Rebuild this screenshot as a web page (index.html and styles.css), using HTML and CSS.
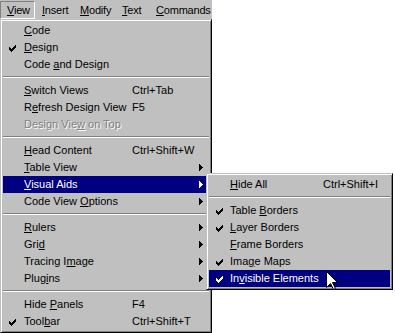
FILE: index.html
```html
<!DOCTYPE html>
<html>
<head>
<meta charset="utf-8">
<link rel="stylesheet" href="styles.css">
</head>
<body>
<div class="screen">
  <div class="menubar">
    <div class="mb-item pressed"><u>V</u>iew</div>
    <div class="mb-item"><u>I</u>nsert</div>
    <div class="mb-item"><u>M</u>odify</div>
    <div class="mb-item"><u>T</u>ext</div>
    <div class="mb-item"><u>C</u>ommands</div>
  </div>

  <div class="menu main">
    <div class="item"><span class="chk"></span><span class="label"><u>C</u>ode</span></div>
    <div class="item"><span class="chk"><svg width="7" height="7" viewBox="0 0 7 7"><path fill="currentColor" d="M6 0h1v1h-1z M5 1h2v1h-2z M0 2h1v1h-1z M4 2h3v1h-3z M0 3h2v1h-2z M3 3h3v1h-3z M0 4h5v1h-5z M1 5h3v1h-3z M2 6h1v1h-1z"/></svg></span><span class="label"><u>D</u>esign</span></div>
    <div class="item"><span class="chk"></span><span class="label">Code <u>a</u>nd Design</span></div>
    <div class="sep"></div>
    <div class="item"><span class="chk"></span><span class="label"><u>S</u>witch Views</span><span class="key">Ctrl+Tab</span></div>
    <div class="item"><span class="chk"></span><span class="label">R<u>e</u>fresh Design View</span><span class="key">F5</span></div>
    <div class="item disabled"><span class="chk"></span><span class="label">Design Vie<u>w</u> on Top</span></div>
    <div class="sep"></div>
    <div class="item"><span class="chk"></span><span class="label"><u>H</u>ead Content</span><span class="key">Ctrl+Shift+W</span></div>
    <div class="item"><span class="chk"></span><span class="label"><u>T</u>able View</span><span class="key"></span><span class="arr"><svg width="4" height="7" viewBox="0 0 4 7"><path fill="currentColor" d="M0 0h1v7h-1z M1 1h1v5h-1z M2 2h1v3h-1z M3 3h1v1h-1z"/></svg></span></div>
    <div class="item active"><span class="chk"></span><span class="label"><u>V</u>isual Aids</span><span class="key"></span><span class="arr"><svg width="4" height="7" viewBox="0 0 4 7"><path fill="currentColor" d="M0 0h1v7h-1z M1 1h1v5h-1z M2 2h1v3h-1z M3 3h1v1h-1z"/></svg></span></div>
    <div class="item"><span class="chk"></span><span class="label">Code View <u>O</u>ptions</span><span class="key"></span><span class="arr"><svg width="4" height="7" viewBox="0 0 4 7"><path fill="currentColor" d="M0 0h1v7h-1z M1 1h1v5h-1z M2 2h1v3h-1z M3 3h1v1h-1z"/></svg></span></div>
    <div class="sep"></div>
    <div class="item"><span class="chk"></span><span class="label"><u>R</u>ulers</span><span class="key"></span><span class="arr"><svg width="4" height="7" viewBox="0 0 4 7"><path fill="currentColor" d="M0 0h1v7h-1z M1 1h1v5h-1z M2 2h1v3h-1z M3 3h1v1h-1z"/></svg></span></div>
    <div class="item"><span class="chk"></span><span class="label">Gri<u>d</u></span><span class="key"></span><span class="arr"><svg width="4" height="7" viewBox="0 0 4 7"><path fill="currentColor" d="M0 0h1v7h-1z M1 1h1v5h-1z M2 2h1v3h-1z M3 3h1v1h-1z"/></svg></span></div>
    <div class="item"><span class="chk"></span><span class="label">Tracing I<u>m</u>age</span><span class="key"></span><span class="arr"><svg width="4" height="7" viewBox="0 0 4 7"><path fill="currentColor" d="M0 0h1v7h-1z M1 1h1v5h-1z M2 2h1v3h-1z M3 3h1v1h-1z"/></svg></span></div>
    <div class="item"><span class="chk"></span><span class="label">Plug<u>i</u>ns</span><span class="key"></span><span class="arr"><svg width="4" height="7" viewBox="0 0 4 7"><path fill="currentColor" d="M0 0h1v7h-1z M1 1h1v5h-1z M2 2h1v3h-1z M3 3h1v1h-1z"/></svg></span></div>
    <div class="sep"></div>
    <div class="item"><span class="chk"></span><span class="label">Hide <u>P</u>anels</span><span class="key">F4</span></div>
    <div class="item"><span class="chk"><svg width="7" height="7" viewBox="0 0 7 7"><path fill="currentColor" d="M6 0h1v1h-1z M5 1h2v1h-2z M0 2h1v1h-1z M4 2h3v1h-3z M0 3h2v1h-2z M3 3h3v1h-3z M0 4h5v1h-5z M1 5h3v1h-3z M2 6h1v1h-1z"/></svg></span><span class="label">Tool<u>b</u>ar</span><span class="key">Ctrl+Shift+T</span></div>
  </div>

  <div class="menu sub">
    <div class="item"><span class="chk"></span><span class="label"><u>H</u>ide All</span><span class="key">Ctrl+Shift+I</span></div>
    <div class="sep"></div>
    <div class="item"><span class="chk"><svg width="7" height="7" viewBox="0 0 7 7"><path fill="currentColor" d="M6 0h1v1h-1z M5 1h2v1h-2z M0 2h1v1h-1z M4 2h3v1h-3z M0 3h2v1h-2z M3 3h3v1h-3z M0 4h5v1h-5z M1 5h3v1h-3z M2 6h1v1h-1z"/></svg></span><span class="label">Table <u>B</u>orders</span></div>
    <div class="item"><span class="chk"><svg width="7" height="7" viewBox="0 0 7 7"><path fill="currentColor" d="M6 0h1v1h-1z M5 1h2v1h-2z M0 2h1v1h-1z M4 2h3v1h-3z M0 3h2v1h-2z M3 3h3v1h-3z M0 4h5v1h-5z M1 5h3v1h-3z M2 6h1v1h-1z"/></svg></span><span class="label"><u>L</u>ayer Borders</span></div>
    <div class="item"><span class="chk"></span><span class="label"><u>F</u>rame Borders</span></div>
    <div class="item"><span class="chk"><svg width="7" height="7" viewBox="0 0 7 7"><path fill="currentColor" d="M6 0h1v1h-1z M5 1h2v1h-2z M0 2h1v1h-1z M4 2h3v1h-3z M0 3h2v1h-2z M3 3h3v1h-3z M0 4h5v1h-5z M1 5h3v1h-3z M2 6h1v1h-1z"/></svg></span><span class="label">Ima<u>g</u>e Maps</span></div>
    <div class="item active"><span class="chk"><svg width="7" height="7" viewBox="0 0 7 7"><path fill="currentColor" d="M6 0h1v1h-1z M5 1h2v1h-2z M0 2h1v1h-1z M4 2h3v1h-3z M0 3h2v1h-2z M3 3h3v1h-3z M0 4h5v1h-5z M1 5h3v1h-3z M2 6h1v1h-1z"/></svg></span><span class="label">In<u>v</u>isible Elements</span></div>
  </div>

  <svg class="cursor" width="13" height="20" viewBox="0 0 13 20"><path d="M0.5 0.5 L0.5 16.5 L4.5 12.5 L7.5 18.5 L9.5 17.5 L6.5 11.5 L11.5 11.5 Z" fill="#fff" stroke="#000" stroke-width="1"/></svg>
</div>
</body>
</html>
```

FILE: styles.css
```css
html, body {
  margin: 0;
  padding: 0;
  background: #fff;
}

.screen {
  position: relative;
  width: 395px;
  height: 333px;
  overflow: hidden;
  font-family: "Liberation Sans", Arial, sans-serif;
  font-size: 11px;
  color: #000;
}

u {
  text-decoration: underline;
  text-underline-offset: 1px;
}

.menubar {
  width: 212px;
  height: 19px;
  box-sizing: border-box;
  padding-top: 1px;
  background: #c0c0c0;
  display: grid;
  grid-template-columns: 36px 38px 42px 34px 62px;
  overflow: hidden;
  letter-spacing: -0.2px;
}

.mb-item {
  height: 18px;
  line-height: 18px;
  padding-left: 6px;
  box-sizing: border-box;
  white-space: nowrap;
}

.mb-item.pressed {
  width: 35px;
  border: 1px solid;
  border-color: #808080 #fff #fff #808080;
  line-height: 16px;
  padding-left: 6px;
}

.menu {
  position: absolute;
  box-sizing: border-box;
  background: #c0c0c0;
  border: 1px solid;
  border-color: #c0c0c0 #000 #000 #c0c0c0;
  box-shadow: inset 1px 1px 0 #fff, inset -1px -1px 0 #808080;
  padding: 2px;
  display: flex;
  flex-direction: column;
}

.menu.main {
  left: 0;
  top: 19px;
  width: 212px;
  height: 314px;
  --label-w: 108px;
  --chk-x: 6px;
}

.menu.sub {
  left: 206px;
  top: 173px;
  width: 187px;
  height: 117px;
  --label-w: 93px;
  --chk-x: 7px;
}

.item {
  height: 17px;
  line-height: 17px;
  display: flex;
  align-items: center;
  white-space: nowrap;
}

.item .chk {
  width: 21px;
  height: 17px;
  flex: none;
  box-sizing: border-box;
  padding-left: var(--chk-x);
  padding-top: 6px;
  display: flex;
  align-items: flex-start;
}

.item .chk svg {
  display: block;
}

.item .label {
  width: var(--label-w);
  flex: none;
}

.item .key {
  flex: 1;
}

.item .arr {
  width: 4px;
  height: 17px;
  margin-right: 6px;
  display: flex;
  align-items: center;
  flex: none;
}

.item .arr svg {
  display: block;
}

.item.active {
  background: #000080;
  color: #fff;
}

.item.disabled {
  color: #808080;
  text-shadow: 1px 1px 0 #fff;
}

.sep {
  margin: 3px 0 4px;
  border-top: 1px solid #808080;
  border-bottom: 1px solid #fff;
  height: 0;
}

.cursor {
  position: absolute;
  left: 326px;
  top: 271px;
}
```
